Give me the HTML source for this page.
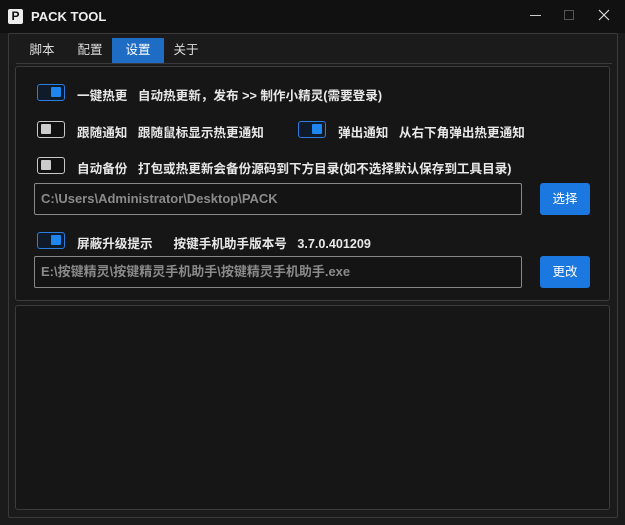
<!DOCTYPE html>
<html><head><meta charset="utf-8"><style>
*{margin:0;padding:0;box-sizing:border-box}
body{width:625px;height:525px;background:#1b1b1b;font-family:"Liberation Sans","Noto Sans CJK SC",sans-serif;color:#e8e8e8;position:relative;overflow:hidden;font-weight:bold;font-size:12px}
.a{position:absolute}
.tb{left:0;top:0;width:625px;height:33px;background:#111}
.frame{left:8px;top:33px;width:610px;height:485px;border:1px solid #3a3a3a;border-radius:2px;background:#1b1b1b}
.panel{border:1px solid #3c3c3c;border-radius:3px;background:#161616}
.tab{top:38px;height:25px;line-height:25px;text-align:center;font-size:12.5px;color:#ddd;font-weight:normal}
.tg{width:28px;height:17px;border:1.5px solid #c8c8c8;border-radius:3px;background:#111}
.tg i{position:absolute;left:3px;top:2px;width:10px;height:10px;background:#ccc;border-radius:1px}
.tg.on{border-color:#2b7de0;background:#0f1a2a}
.tg.on i{left:auto;right:3px;background:#1f86f0}
.t{font-size:12.6px;white-space:nowrap}
.inp{height:32px;border:1px solid #888;border-radius:2px;background:#141414;color:#8a8a8a;font-size:13px;line-height:30px;padding-left:6px;white-space:nowrap;font-weight:600}
.btn{width:50px;height:32px;background:#1b78e0;border-radius:3px;color:#fff;text-align:center;line-height:32px;font-size:12.5px;font-weight:normal}
</style></head><body>
<div class="a tb"></div>
<div class="a" style="left:8px;top:9px;width:15px;height:15px;background:#eee;border-radius:2px;color:#111;font-size:12px;line-height:15px;text-align:center;font-weight:bold">P</div>
<div class="a" style="left:31px;top:9px;font-size:13px;color:#eee">PACK TOOL</div>
<div class="a" style="left:530px;top:15px;width:11px;height:1px;background:#ccc"></div>
<div class="a" style="left:564px;top:10px;width:10px;height:10px;border:1px solid #555"></div>
<svg class="a" style="left:598px;top:9px" width="12" height="12"><path d="M1 1L11 11M11 1L1 11" stroke="#ddd" stroke-width="1.2"/></svg>
<div class="a frame"></div>
<div class="a" style="left:16px;top:63px;width:596px;height:1px;background:#3a3a3a"></div>
<div class="a tab" style="left:20px;width:44px">脚本</div>
<div class="a tab" style="left:68px;width:44px">配置</div>
<div class="a tab" style="left:112px;width:52px;background:#1f6cc4;color:#fff">设置</div>
<div class="a tab" style="left:164px;width:44px">关于</div>
<div class="a panel" style="left:15px;top:66px;width:595px;height:235px"></div>
<div class="a panel" style="left:15px;top:305px;width:595px;height:205px"></div>

<div class="a tg on" style="left:37px;top:84px"><i></i></div>
<div class="a t" style="left:77px;top:85px">一键热更&nbsp;&nbsp;&nbsp;自动热更新，发布 &gt;&gt; 制作小精灵(需要登录)</div>

<div class="a tg" style="left:37px;top:121px"><i></i></div>
<div class="a t" style="left:77px;top:122px">跟随通知&nbsp;&nbsp;&nbsp;跟随鼠标显示热更通知</div>
<div class="a tg on" style="left:298px;top:121px"><i></i></div>
<div class="a t" style="left:338px;top:122px">弹出通知&nbsp;&nbsp;&nbsp;从右下角弹出热更通知</div>

<div class="a tg" style="left:37px;top:157px"><i></i></div>
<div class="a t" style="left:77px;top:158px">自动备份&nbsp;&nbsp;&nbsp;打包或热更新会备份源码到下方目录(如不选择默认保存到工具目录)</div>

<div class="a inp" style="left:34px;top:183px;width:488px">C:\Users\Administrator\Desktop\PACK</div>
<div class="a btn" style="left:540px;top:183px">选择</div>

<div class="a tg on" style="left:37px;top:232px"><i></i></div>
<div class="a t" style="left:77px;top:233px">屏蔽升级提示&nbsp;&nbsp;&nbsp;&nbsp;&nbsp;&nbsp;按键手机助手版本号&nbsp;&nbsp;&nbsp;3.7.0.401209</div>

<div class="a inp" style="left:34px;top:256px;width:488px">E:\按键精灵\按键精灵手机助手\按键精灵手机助手.exe</div>
<div class="a btn" style="left:540px;top:256px">更改</div>
</body></html>
